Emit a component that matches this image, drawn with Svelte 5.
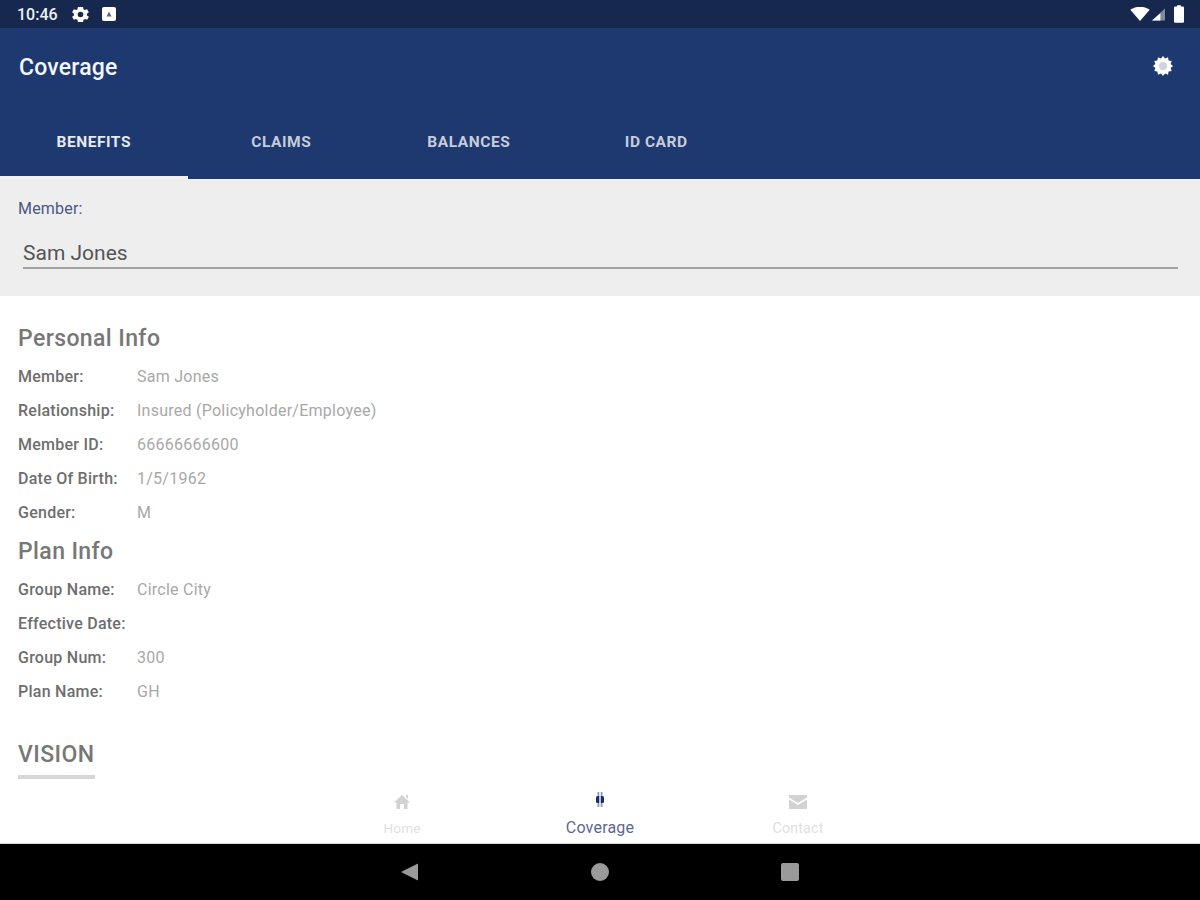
<script>
  const tabs = ['BENEFITS', 'CLAIMS', 'BALANCES', 'ID CARD'];
  const personal = [
    ['Member:', 'Sam Jones'],
    ['Relationship:', 'Insured (Policyholder/Employee)'],
    ['Member ID:', '66666666600'],
    ['Date Of Birth:', '1/5/1962'],
    ['Gender:', 'M']
  ];
  const plan = [
    ['Group Name:', 'Circle City'],
    ['Effective Date:', ''],
    ['Group Num:', '300'],
    ['Plan Name:', 'GH']
  ];
  const gear = 'M19.4 13a7.5 7.5 0 0 0 0-2l2.1-1.6-2-3.5-2.5 1a7.5 7.5 0 0 0-1.7-1L15 3.3h-6l-.4 2.6a7.5 7.5 0 0 0-1.7 1l-2.5-1-2 3.5L4.500 11a7.5 7.5 0 0 0 0 2l-2.1 1.6 2 3.5 2.500-1a7.5 7.5 0 0 0 1.700 1l.4 2.600h6l.4-2.600a7.5 7.5 0 0 0 1.700-1l2.500 1 2-3.500z';
</script>

<div class="page">
  <div class="status">
    <span class="time">10:46</span>
    <svg class="st-gear" viewBox="0 0 24 24"><path fill="#fff" fill-rule="evenodd" d="{gear}M12 8.800a3.200 3.200 0 1 0 0 6.400 3.200 3.200 0 0 0 0-6.400z"/></svg>
    <svg class="st-a" viewBox="0 0 14 14"><rect width="14" height="14" rx="2" fill="#fff"/><path d="M4.500 9.500l2.500-5 2.500 5z" fill="#5d6781"/></svg>
    <span class="spacer"></span>
    <svg class="wifi" viewBox="0 0 18 13"><path d="M0 2.500C5-1 13-1 18 2.500L9 13z" fill="#fff"/></svg>
    <svg class="signal" viewBox="0 0 14 13"><path d="M14 0v13H0z" fill="#fff" opacity=".45"/><path d="M9 5.200V13H0z" fill="#fff"/></svg>
    <svg class="battery" viewBox="0 0 8 14"><path d="M2.500 0h3v1H7a1 1 0 0 1 1 1v11a1 1 0 0 1-1 1H1a1 1 0 0 1-1-1V2a1 1 0 0 1 1-1h1.500z" fill="#fff"/></svg>
  </div>

  <header class="appbar">
    <div class="title-row">
      <h1>Coverage</h1>
      <svg class="settings" viewBox="0 0 24 24"><path fill="#fff" d="M12 1l2.200 2.700 3.300-1.200.6 3.400 3.400.6-1.200 3.300L23 12l-2.700 2.200 1.200 3.300-3.400.6-.6 3.400-3.300-1.200L12 23l-2.200-2.700-3.300 1.200-.6-3.400-3.400-.6 1.200-3.300L1 12l2.700-2.200-1.200-3.300 3.400-.6.6-3.400 3.300 1.200z"/><circle cx="12" cy="12" r="4.500" fill="#cfd3db"/></svg>
    </div>
    <nav class="tabs">
      {#each tabs as tab, i}
        <div class="tab" class:active={i === 0}>{tab}</div>
      {/each}
    </nav>
  </header>

  <section class="member">
    <div class="member-label">Member:</div>
    <div class="select">Sam Jones</div>
  </section>

  <main class="content">
    <h2 class="first">Personal Info</h2>
    {#each personal as row}
      <div class="row"><span class="key">{row[0]}</span><span class="val">{row[1]}</span></div>
    {/each}
    <h2 class="second">Plan Info</h2>
    {#each plan as row}
      <div class="row"><span class="key">{row[0]}</span><span class="val">{row[1]}</span></div>
    {/each}
    <h2 class="vision">VISION</h2>
  </main>

  <footer class="bottom">
    <div class="item">
      <svg class="ic" viewBox="0 0 20 20"><path d="M8 17v-5h4v5h3.500v-6.500H18L10 3 2 10.500h2.500V17zM14 3h2v4l-2-2z" fill="#d2d2d2"/></svg>
      <span class="off">Home</span>
    </div>
    <div class="item">
      <svg class="ic cov" viewBox="0 0 20 20"><rect x="6" y="6" width="8" height="7" rx="1.500" fill="#1b2f66"/><rect x="7.500" y="2" width="5" height="4" fill="#8f9abb"/><rect x="7.500" y="13" width="5" height="4" fill="#8f9abb"/><rect x="9.300" y="2" width="1.400" height="15" fill="#fff"/></svg>
      <span class="on">Coverage</span>
    </div>
    <div class="item">
      <svg class="ic" viewBox="0 0 20 20"><path d="M1 3h18v2.500l-9 5.500-9-5.500zM1 7.500l9 5.500 9-5.500V17H1z" fill="#d2d2d2"/></svg>
      <span class="off contact">Contact</span>
    </div>
  </footer>

  <div class="sysnav">
    <svg class="nav-ic" viewBox="0 0 18 18"><path d="M17 0.500v17L0 9z" fill="#9a9a9a"/></svg>
    <svg class="nav-ic" viewBox="0 0 18 18"><circle cx="9" cy="9" r="9" fill="#9a9a9a"/></svg>
    <svg class="nav-ic" viewBox="0 0 18 18"><rect width="18" height="18" rx="2" fill="#9a9a9a"/></svg>
  </div>
</div>

<style>
  :global(body) {
    margin: 0;
    background: #fff;
  }

  .page {
    width: 1200px;
    height: 900px;
    display: flex;
    flex-direction: column;
    overflow: hidden;
    font-family: Roboto, "Liberation Sans", sans-serif;
  }

  .status {
    height: 28px;
    background: #17284f;
    display: flex;
    align-items: center;
    padding: 0 16px 0 17px;
    color: #fff;
    flex: none;
  }

  .time {
    font-size: 16px;
    font-weight: 500;
    width: 53px;
    color: #eef0f4;
  }

  .st-gear {
    width: 21px;
    height: 21px;
  }

  .st-a {
    width: 14px;
    height: 14px;
    margin-left: 11px;
  }

  .spacer {
    flex: 1;
  }

  .wifi {
    width: 20px;
    height: 14px;
  }

  .signal {
    width: 13px;
    height: 13px;
    margin-left: 2px;
  }

  .battery {
    width: 10px;
    height: 18px;
    margin-left: 9px;
  }

  .appbar {
    height: 151px;
    background: #1e3870;
    flex: none;
    display: flex;
    flex-direction: column;
    box-sizing: border-box;
  }

  .title-row {
    height: 77px;
    display: flex;
    align-items: center;
    justify-content: space-between;
    padding: 1px 26px 0 19px;
    box-sizing: border-box;
  }

  h1 {
    margin: 0;
    font-size: 23px;
    letter-spacing: 0.2px;
    font-weight: 500;
    color: #f4f6fa;
  }

  .settings {
    width: 22px;
    height: 22px;
    margin-bottom: 2px;
  }

  .tabs {
    height: 74px;
    display: flex;
  }

  .tab {
    width: 187.500px;
    height: 74px;
    box-sizing: border-box;
    padding-top: 27px;
    text-align: center;
    font-size: 15.500px;
    letter-spacing: 0.55px;
    line-height: 20px;
    font-weight: 700;
    color: #c6ccd9;
  }

  .tab.active {
    color: #e6e9f0;
    border-bottom: 3px solid #f2f2f2;
  }

  .member {
    height: 117px;
    background: #eeeeee;
    flex: none;
    box-sizing: border-box;
    padding: 21px 22px 0 18px;
  }

  .member-label {
    font-size: 16px;
    letter-spacing: 0.2px;
    line-height: 18px;
    color: #4b5785;
  }

  .select {
    margin: 14px 0 0 5px;
    padding-top: 7px;
    font-size: 21px;
    line-height: 28px;
    height: 37px;
    box-sizing: border-box;
    color: #555;
    border-bottom: 2px solid #a3a3a3;
  }

  .content {
    flex: 1;
    min-height: 0;
    padding: 29px 0 0 18px;
    color: #777;
  }

  h2 {
    margin: 0;
    font-size: 23px;
    letter-spacing: 0.4px;
    line-height: 28px;
    font-weight: 500;
    color: #777;
  }

  h2.first {
    margin-bottom: 6px;
  }

  h2.second {
    margin-top: 9px;
    margin-bottom: 6px;
  }

  h2.vision {
    display: block;
    margin-top: 33px;
    padding-bottom: 6px;
    border-bottom: 4px solid #d6d6d6;
    width: 77px;
  }

  .row {
    height: 34px;
    display: flex;
    align-items: center;
    font-size: 16px;
    letter-spacing: 0.25px;
  }

  .key {
    width: 119px;
    font-weight: 500;
    color: #6e6e6e;
  }

  .val {
    color: #a8a8a8;
  }

  .bottom {
    height: 59px;
    flex: none;
    display: flex;
    justify-content: center;
    background: #fff;
    border-bottom: 1px solid #d8d8d8;
    box-sizing: border-box;
  }

  .item {
    width: 198px;
    display: flex;
    flex-direction: column;
    align-items: center;
    padding-top: 7px;
    font-size: 16px;
    letter-spacing: 0.2px;
    line-height: 18px;
  }

  .ic {
    width: 20px;
    height: 20px;
    margin-bottom: 7px;
  }

  .cov {
    margin-top: -2px;
    margin-bottom: 9px;
  }

  .off {
    font-size: 13.500px;
    color: #e0e0e0;
  }

  .contact {
    font-size: 14.200px;
  }

  .on {
    color: #5c6790;
  }

  .sysnav {
    height: 56px;
    flex: none;
    background: #000;
    display: flex;
    justify-content: center;
    align-items: center;
    gap: 172px;
  }

  .nav-ic {
    width: 18px;
    height: 18px;
  }
</style>
